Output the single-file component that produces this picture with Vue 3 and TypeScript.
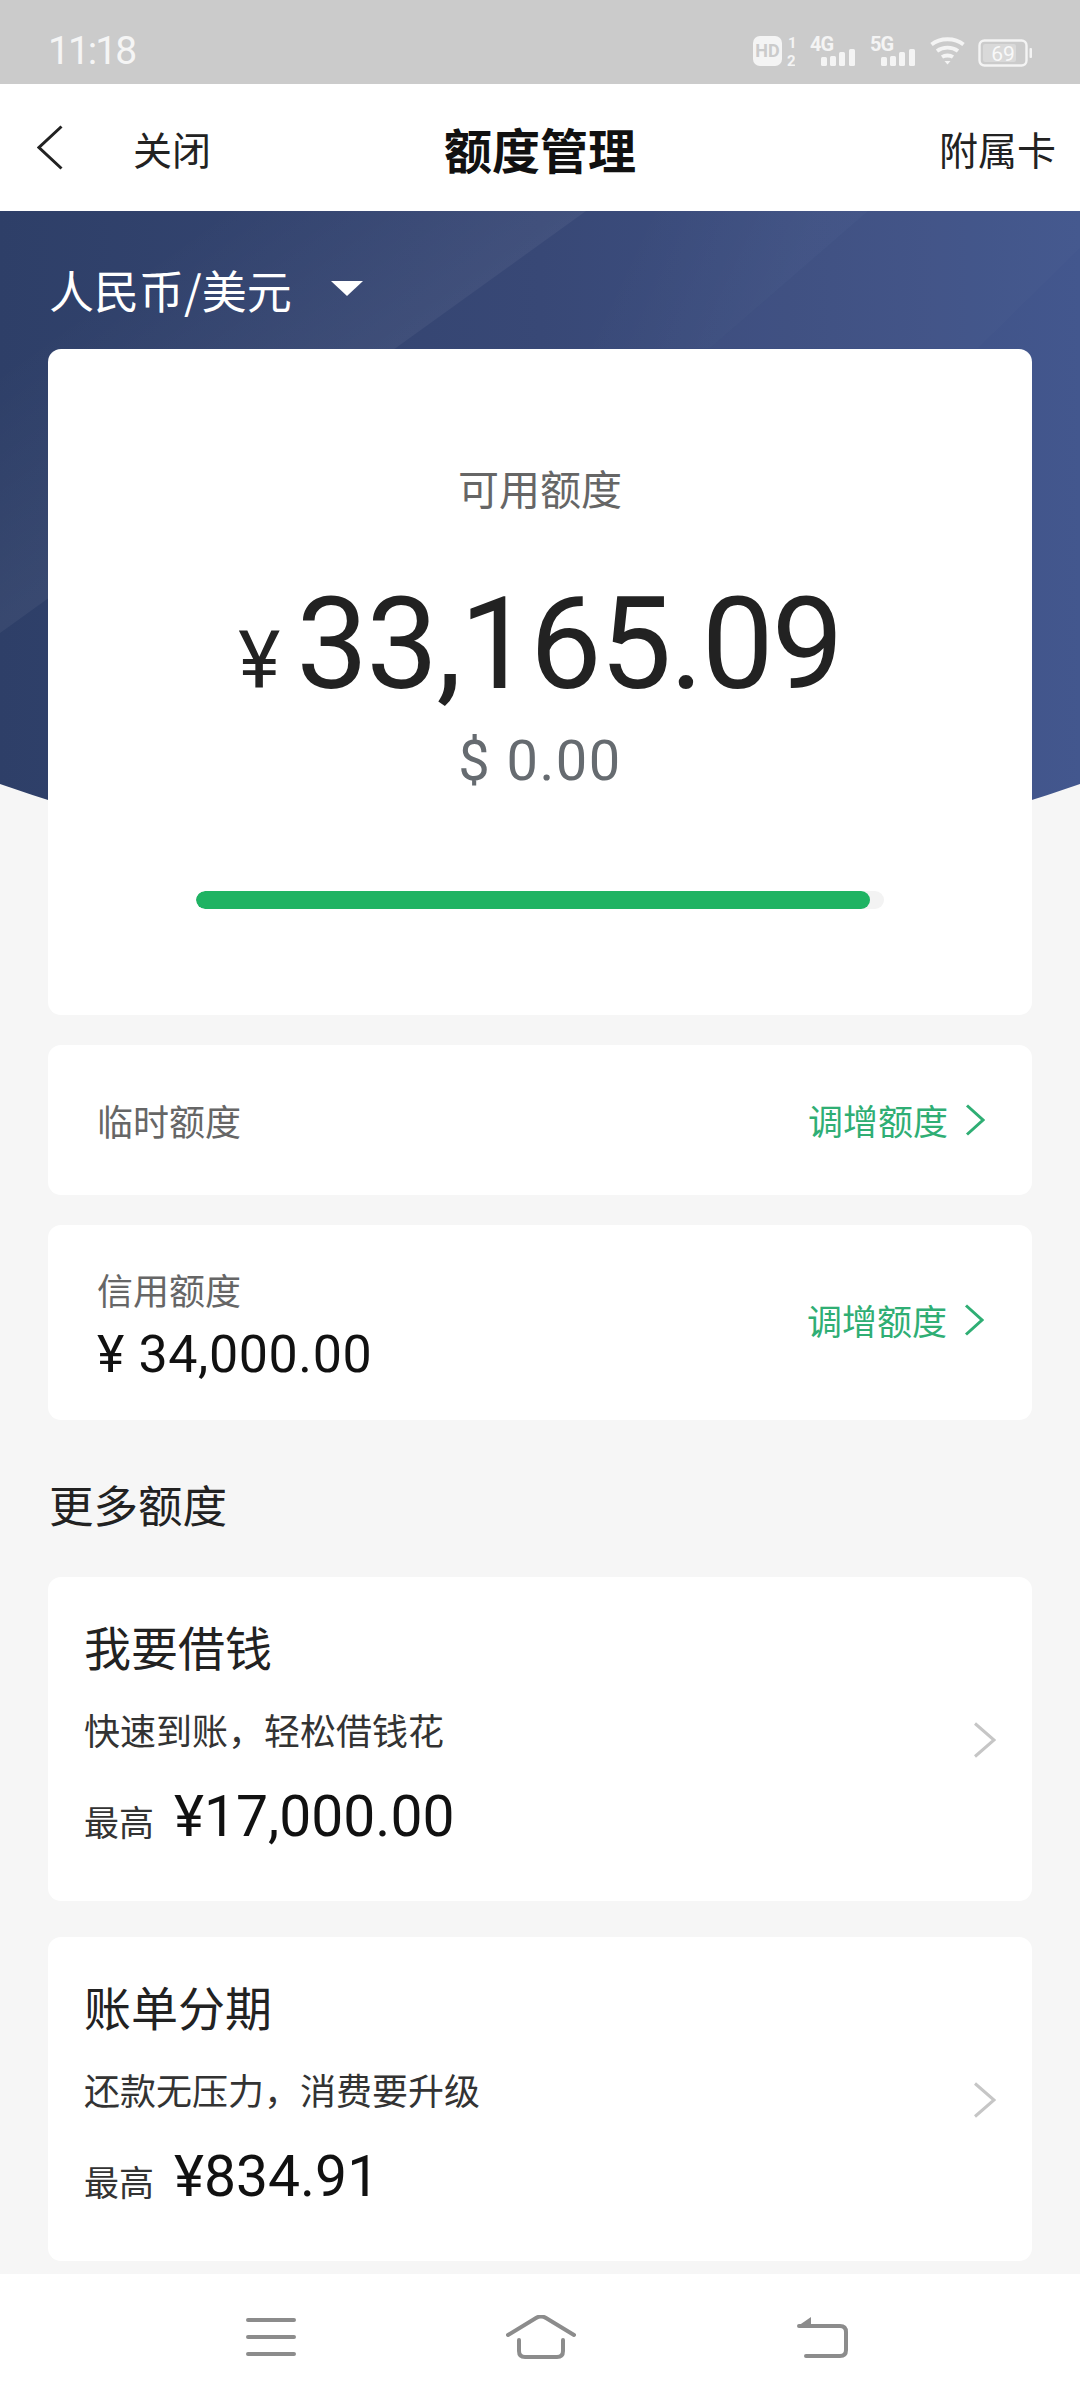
<script setup lang="ts">
interface Offer { title: string; desc: string; amount: string }
const offers: Offer[] = [
  { title: '我要借钱', desc: '快速到账，轻松借钱花', amount: '¥17,000.00' },
  { title: '账单分期', desc: '还款无压力，消费要升级', amount: '¥834.91' },
]
const bars = [
  { x: 12, h: 9 }, { x: 21, h: 10 }, { x: 30, h: 14 }, { x: 40, h: 17 },
]
const networks = ['4G', '5G']
</script>

<template>
  <div class="page">
    <div class="status">
      <span class="time">11:18</span>
      <div class="status-icons">
        <svg width="42" height="40" viewBox="0 0 42 40">
          <rect y="5" width="29" height="30" rx="7" fill="#f4f4f4" />
          <text x="14.5" y="26" text-anchor="middle" class="hd">HD</text>
          <text x="35" y="17" class="sim">1</text>
          <text x="34" y="35" class="sim">2</text>
        </svg>
        <svg v-for="n in networks" :key="n" width="47" height="40" viewBox="0 0 47 40">
          <text x="1" y="20" class="net">{{ n }}</text>
          <rect v-for="b in bars" :key="b.x" :x="b.x" :y="35 - b.h" width="6" :height="b.h" rx="1.5" fill="#f4f4f4" />
        </svg>
        <svg width="35" height="40" viewBox="0 0 35 40" fill="none" stroke="#f4f4f4" stroke-width="3.8">
          <path d="M1.5 13.5 C10 6.5 25 6.5 33.5 13.5" />
          <path d="M7 20 C13 15.5 22 15.5 28 20" />
          <path d="M12 26 C15 24 20 24 23 26" />
          <path d="M14.5 30 H20.5 L17.5 33.5 Z" fill="#f4f4f4" stroke="none" />
        </svg>
        <svg width="54" height="40" viewBox="0 0 54 40">
          <rect x="1.5" y="9.5" width="47" height="25" rx="5" fill="none" stroke="#f4f4f4" stroke-width="2.4" />
          <rect x="5" y="13" width="33" height="18" rx="2" fill="#d9d9d9" />
          <rect x="51.5" y="17" width="2.5" height="10" rx="1" fill="#f4f4f4" />
          <text x="25" y="30" text-anchor="middle" class="batt">69</text>
        </svg>
      </div>
    </div>

    <header class="topbar">
      <div class="top-left">
        <svg width="26" height="45" viewBox="0 0 26 45" fill="none" stroke="#222" stroke-width="3">
          <path d="M24.5 1.5 L2 22.5 L24.5 43.5" />
        </svg>
        <span class="close">关闭</span>
      </div>
      <h1 class="title">额度管理</h1>
      <span class="extra">附属卡</span>
    </header>

    <main class="main">
      <svg class="hero" width="1080" height="680" viewBox="0 0 1080 680" preserveAspectRatio="none">
        <defs>
          <linearGradient id="base" x1="0" y1="0" x2="1" y2="0">
            <stop offset="0" stop-color="#2e3f68" />
            <stop offset="0.5" stop-color="#384876" />
            <stop offset="1" stop-color="#43578e" />
          </linearGradient>
          <linearGradient id="bandA" gradientUnits="userSpaceOnUse" x1="167" y1="34" x2="295" y2="212">
            <stop offset="0" stop-color="#fff" stop-opacity="0" />
            <stop offset="1" stop-color="#fff" stop-opacity="0.05" />
          </linearGradient>
          <linearGradient id="bandB" gradientUnits="userSpaceOnUse" x1="640" y1="0" x2="790" y2="70">
            <stop offset="0" stop-color="#fff" stop-opacity="0" />
            <stop offset="1" stop-color="#fff" stop-opacity="0.03" />
          </linearGradient>
          <clipPath id="heroClip">
            <path d="M0 0 H1080 V573 Q540 762 0 573 Z" />
          </clipPath>
        </defs>
        <g clip-path="url(#heroClip)">
          <rect width="1080" height="680" fill="url(#base)" />
          <path d="M0 0 H586 L0 422 Z" fill="url(#bandA)" />
          <path d="M560 0 H868 L710 137 H520 Z" fill="url(#bandB)" />
          <path d="M868 0 H1080 V37 L978 137 H710 Z" fill="#fff" fill-opacity="0.015" />
        </g>
      </svg>

      <div class="content">
        <div class="currency">
          <span>人民币/美元</span>
          <i class="caret"></i>
        </div>

        <section class="card balance">
          <p class="balance-label">可用额度</p>
          <div class="balance-amount"><span class="yen">¥</span><span>33,165.09</span></div>
          <p class="balance-usd">$ 0.00</p>
          <div class="track"><div class="fill"></div></div>
        </section>

        <section class="card row temp">
          <span class="row-label">临时额度</span>
          <span class="link">调增额度
            <svg width="20" height="32" viewBox="0 0 20 32" fill="none" stroke="#2fae74" stroke-width="3">
              <path d="M2 1.5 L18 16 L2 30.5" />
            </svg>
          </span>
        </section>

        <section class="card row credit">
          <div class="credit-info">
            <div class="row-label">信用额度</div>
            <div class="credit-value">¥ 34,000.00</div>
          </div>
          <span class="link">调增额度
            <svg width="20" height="32" viewBox="0 0 20 32" fill="none" stroke="#2fae74" stroke-width="3">
              <path d="M2 1.5 L18 16 L2 30.5" />
            </svg>
          </span>
        </section>

        <h2 class="section-title">更多额度</h2>

        <section v-for="o in offers" :key="o.title" class="card offer">
          <div>
            <h3 class="offer-title">{{ o.title }}</h3>
            <p class="offer-desc">{{ o.desc }}</p>
            <div class="offer-max"><span class="max-label">最高</span><span class="max-value">{{ o.amount }}</span></div>
          </div>
          <svg width="23" height="36" viewBox="0 0 23 36" fill="none" stroke="#c6c6c6" stroke-width="3">
            <path d="M2 1.5 L21 18 L2 34.5" />
          </svg>
        </section>
      </div>
    </main>

    <nav class="navbar">
      <svg width="50" height="38" viewBox="0 0 50 38" fill="none" stroke="#8c8c8c" stroke-width="4" stroke-linecap="round">
        <path d="M2 2 H48 M2 19 H48 M2 36 H48" />
      </svg>
      <svg class="home" width="70" height="44" viewBox="0 0 70 44" fill="none" stroke="#8c8c8c" stroke-width="4" stroke-linecap="round" stroke-linejoin="round">
        <path d="M2 20 L30 3 Q35 0 40 3 L68 20" />
        <path d="M13 25 V36 Q13 42 19 42 H51 Q57 42 57 36 V25" />
      </svg>
      <svg width="52" height="42" viewBox="0 0 52 42" fill="none">
        <path d="M2 10 L15 1 V10 Z" fill="#8c8c8c" />
        <path d="M3 10 H44 Q50 10 50 16 V34 Q50 40 44 40 H10" stroke="#8c8c8c" stroke-width="4" stroke-linecap="round" />
      </svg>
    </nav>
  </div>
</template>

<style>
html, body { margin: 0; padding: 0; background: #f6f6f6; }
</style>

<style scoped>
.page {
  width: 1080px;
  height: 2400px;
  display: flex;
  flex-direction: column;
  overflow: hidden;
  background: #f6f6f6;
  font-family: "Noto Sans CJK SC", Roboto, sans-serif;
  color: #222;
}
p, h1, h2, h3 { margin: 0; font-weight: 400; }

.status {
  height: 84px;
  flex: none;
  box-sizing: border-box;
  padding: 0 48px;
  display: flex;
  align-items: center;
  justify-content: space-between;
  background: #cbcbcb;
}
.time { font: 400 39px/60px Roboto, sans-serif; color: #f5f5f5; letter-spacing: -2px; margin-top: 18px; }
.status-icons { display: flex; align-items: center; gap: 13.5px; margin-top: 18px; }
.hd { font: 700 18px Roboto, sans-serif; fill: #cbcbcb; }
.sim { font: 700 15px Roboto, sans-serif; fill: #f4f4f4; }
.net { font: 700 20px Roboto, sans-serif; fill: #f4f4f4; letter-spacing: -1px; }
.batt { font: 400 21px Roboto, sans-serif; fill: #f8f8f8; }

.topbar {
  height: 127px;
  flex: none;
  position: relative;
  display: flex;
  align-items: center;
  justify-content: space-between;
  box-sizing: border-box;
  padding: 0 24px 0 37px;
  background: #fff;
}
.top-left { display: flex; align-items: center; gap: 70px; }
.close, .extra { font-size: 39px; line-height: 50px; color: #222; }
.title {
  position: absolute;
  left: 0;
  right: 0;
  text-align: center;
  font-size: 48px;
  font-weight: 700;
  line-height: 60px;
  color: #111;
  pointer-events: none;
}

.main { flex: 1; position: relative; min-height: 0; }
.hero { position: absolute; left: 0; top: 0; display: block; }
.content { position: relative; padding: 0 48px; display: flex; flex-direction: column; }

.currency {
  height: 138px;
  display: flex;
  align-items: center;
  gap: 39px;
  padding-left: 1px;
  padding-top: 20px;
  box-sizing: border-box;
  color: #fff;
  font-size: 45px;
  line-height: 60px;
}
.caret {
  width: 0;
  height: 0;
  margin-top: -4px;
  border-left: 16px solid transparent;
  border-right: 16px solid transparent;
  border-top: 15px solid #fff;
}

.card { background: #fff; border-radius: 13px; box-sizing: border-box; }

.balance { height: 666px; padding-top: 108px; text-align: center; }
.balance-label { font-size: 41px; line-height: 60px; color: #666; }
.balance-amount {
  margin-top: 62px;
  height: 130px;
  display: flex;
  justify-content: center;
  align-items: baseline;
  gap: 16px;
  font: 400 128px/130px Roboto, sans-serif;
  letter-spacing: -1.9px;
  color: #222;
}
.yen { font-size: 80px; letter-spacing: 0; }
.balance-usd {
  margin-top: 17px;
  font: 400 56px/70px Roboto, sans-serif;
  letter-spacing: 1.5px;
  color: #666b70;
}
.track {
  margin: 95px 148px 0;
  height: 18px;
  border-radius: 9px;
  background: #f3f3f3;
  overflow: hidden;
}
.fill { width: 98%; height: 100%; border-radius: 9px; background: #1fb363; }

.row {
  display: flex;
  align-items: center;
  justify-content: space-between;
  padding: 0 47px 0 49px;
  margin-top: 30px;
}
.temp { height: 150px; }
.credit { height: 195px; }
.credit-info { padding-top: 4px; }
.credit .link { margin-bottom: 6px; margin-right: 1px; }
.row-label { font-size: 36px; line-height: 50px; color: #666; }
.credit-value { font: 400 52px/62px Roboto, sans-serif; letter-spacing: 0.6px; color: #111; margin-top: 10px; }
.link {
  display: flex;
  align-items: center;
  gap: 17px;
  font-size: 35px;
  line-height: 50px;
  color: #2fae74;
}

.section-title { height: 157px; box-sizing: border-box; padding-top: 54px; font-size: 44.5px; line-height: 60px; color: #222; padding-left: 1px; }

.offer {
  height: 324px;
  padding: 39px 36px 0 36px;
  display: flex;
  justify-content: space-between;
  align-items: flex-start;
}
.offer + .offer { margin-top: 36px; }
.offer > svg { margin-top: 106px; }
.offer-title { font-size: 47px; line-height: 60px; color: #222; }
.offer-desc { margin-top: 28px; font-size: 36px; line-height: 50px; color: #333; }
.offer-max { margin-top: 28px; display: flex; align-items: baseline; gap: 20px; line-height: 70px; }
.max-label { font-size: 35px; color: #333; }
.max-value { font: 400 57px/70px Roboto, sans-serif; color: #111; }

.navbar {
  height: 126px;
  flex: none;
  position: relative;
  background: #fff;
  display: flex;
  align-items: center;
  justify-content: space-between;
  box-sizing: border-box;
  padding: 0 232px 0 246px;
  margin-top: auto;
}
.home { margin-right: 10px; }
</style>
